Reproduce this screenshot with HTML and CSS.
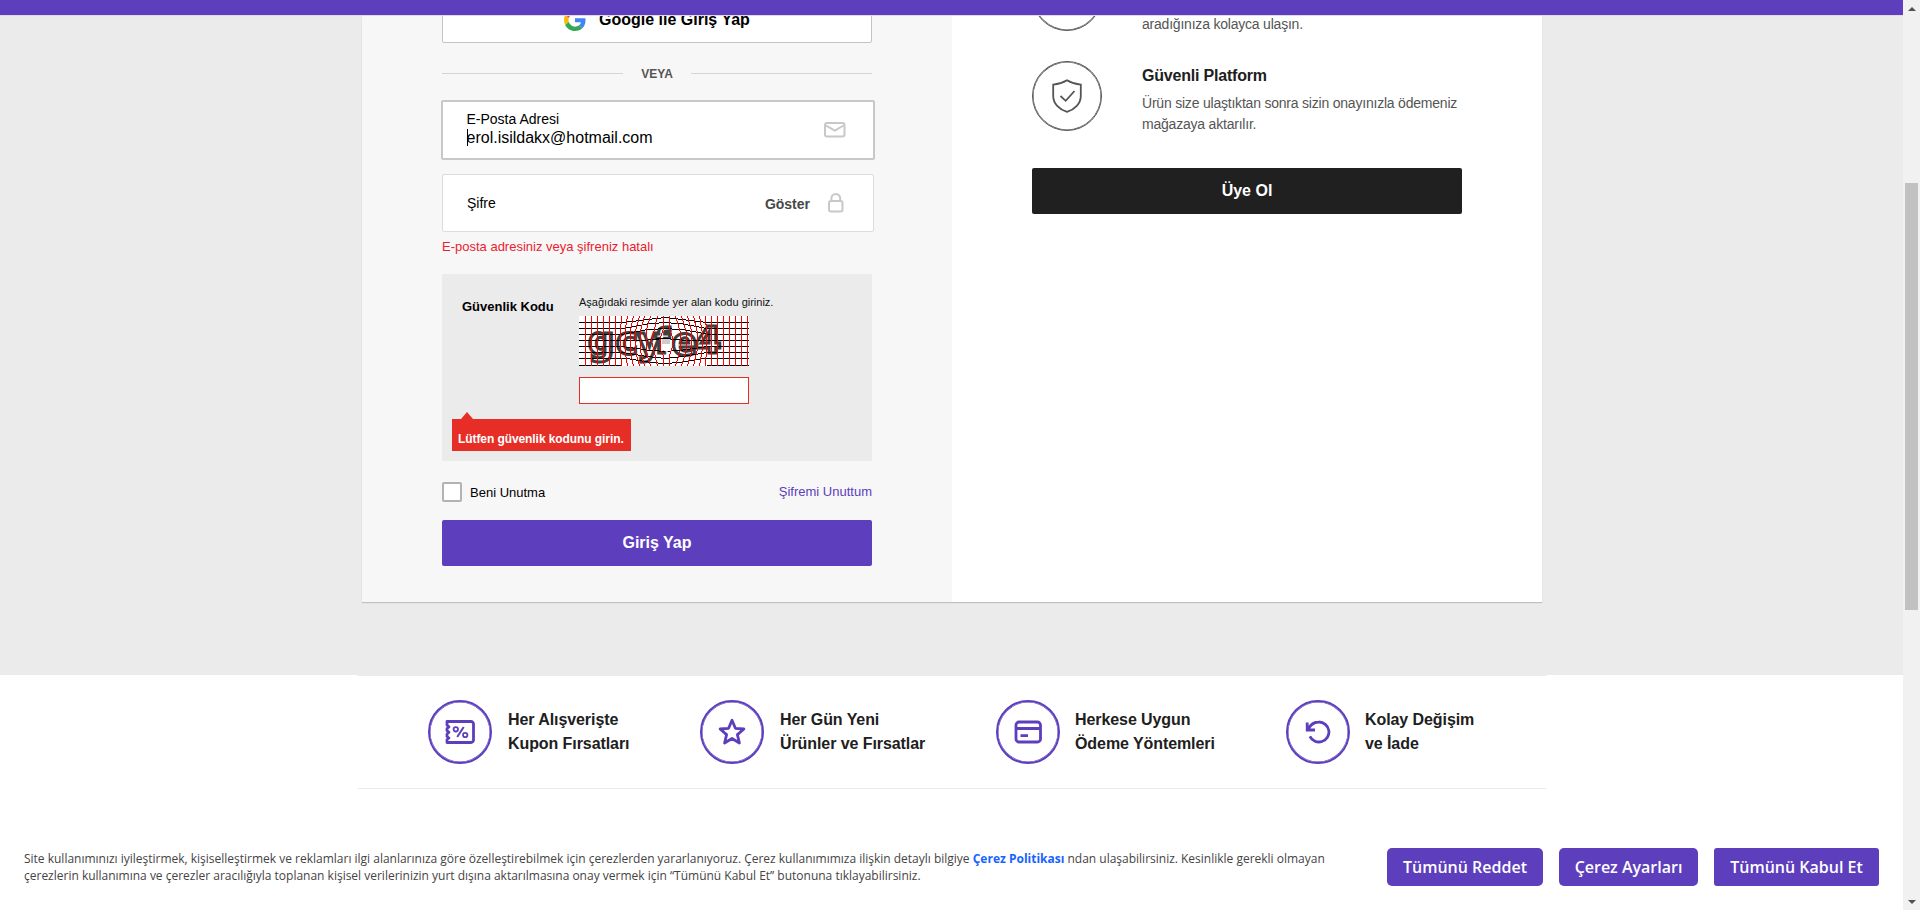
FILE: index.html
```html
<!DOCTYPE html>
<html lang="tr">
<head>
<meta charset="utf-8">
<title>Giriş Yap</title>
<link rel="stylesheet" href="styles.css">
</head>
<body>
<div class="window">
  <div class="page">
    <header class="topbar"></header>
    <main class="main">
      <div class="card">
        <section class="login">
          <button class="google">
            <svg width="22" height="22" viewBox="0 0 48 48"><path fill="#EA4335" d="M24 9.5c3.54 0 6.71 1.22 9.21 3.6l6.85-6.85C35.9 2.38 30.47 0 24 0 14.62 0 6.51 5.38 2.56 13.22l7.98 6.19C12.43 13.72 17.74 9.5 24 9.5z"/><path fill="#4285F4" d="M46.98 24.55c0-1.57-.15-3.09-.38-4.55H24v9.02h12.94c-.58 2.96-2.26 5.48-4.78 7.18l7.73 6c4.51-4.18 7.09-10.36 7.09-17.65z"/><path fill="#FBBC05" d="M10.53 28.59c-.48-1.45-.76-2.99-.76-4.59s.27-3.14.76-4.59l-7.98-6.19C.92 16.46 0 20.12 0 24s.92 7.54 2.56 10.78l7.97-6.19z"/><path fill="#34A853" d="M24 48c6.48 0 11.93-2.13 15.89-5.81l-7.73-6c-2.15 1.45-4.92 2.3-8.16 2.3-6.26 0-11.57-4.22-13.47-9.91l-7.98 6.19C6.51 42.62 14.62 48 24 48z"/></svg>
            <span>Google ile Giriş Yap</span>
          </button>
          <div class="divider"><span>VEYA</span></div>
          <div class="field field-active">
            <div class="field-text">
              <label>E-Posta Adresi</label>
              <div class="value"><i class="caret"></i>erol.isildakx@hotmail.com</div>
            </div>
            <svg class="mail" width="22" height="16" viewBox="0 0 22 16" fill="none" stroke="#c8c8c8" stroke-width="2"><rect x="1" y="1" width="19.5" height="13.6" rx="2"/><path d="M2 3.5l8.8 5.2 8.8-5.2"/></svg>
          </div>
          <div class="field field-pass">
            <label>Şifre</label>
            <span class="show">Göster</span>
            <svg width="16" height="20" viewBox="0 0 16 20" fill="none" stroke="#c8c8c8" stroke-width="2"><rect x="1" y="8" width="13.5" height="10.6" rx="2"/><path d="M3.4 8V5.4a4.4 4.4 0 0 1 8.8 0V8"/></svg>
          </div>
          <p class="error">E-posta adresiniz veya şifreniz hatalı</p>
          <div class="captcha">
            <strong>Güvenlik Kodu</strong>
            <div class="captcha-side">
              <span class="hint">Aşağıdaki resimde yer alan kodu giriniz.</span>
              <svg class="captcha-img" width="170" height="50" viewBox="0 0 170 50">
                <rect width="170" height="50" fill="#fff"/>
                <g class="code">
                  <text x="9" y="38" font-size="37">g</text>
                  <text x="37" y="38" font-size="37">c</text>
                  <text x="58" y="38" font-size="37">y</text>
                  <text x="76" y="37" font-size="34">f</text>
                  <text x="93" y="39" font-size="37">e</text>
                  <text x="116" y="37" font-size="38">4</text>
                </g>
                <g shape-rendering="crispEdges" fill="none" stroke-width="1">
                  <path stroke="#000" d="M0 6.5H44L86 1.500L128 6.500H170M0 12.500H44L68 8L86 6.500L104 8L128 12.500H170M0 18.500H42L66 14L86 12.500L106 14L130 18.500H170M0 24.500H64L74 23.500L86 22.500L98 23.500L108 24.500H170M0 30.500H44L68 34L86 35.500L104 34L128 30.500H170M0 36.500H44L68 40.500L86 42.500L104 40.500L128 36.500H170M0 42.500H48L72 46.500L86 47.500L100 46.500L124 42.500H170M0 49.500H42M128 49.500H170"/>
                  <path stroke="#f00" d="M6.500 0V50M12.500 0V50M18.500 0V50M24.500 0V50M30.500 0V50M36.500 0V50M42.500 0L41 25L42.500 50M48.500 0L46 15V35L48.500 50M54.500 0L51.500 15V35L54.500 50M60.500 0L56.500 15V35L60.500 50M65.500 0L61.500 15V35L65.500 50M71.500 0L67 15V35L71.500 50M78.500 0L75 15L72.500 25L75 35L78.500 50M84.500 0V12L81.500 22V34L84.500 40V50M90.500 0V12L93.500 22V30L90.500 40V50M96.500 0L101 15V35L96.500 50M102.500 0L107 15V35L102.500 50M108.500 0L112.500 15V35L108.500 50M114.500 0L118 15V35L114.500 50M120.500 0L123 15V35L120.500 50M126.500 0L128 25L126.500 50M132.500 0V50M138.500 0V50M144.500 0V50M150.500 0V50M156.500 0V50M162.500 0V50M168.500 0V50"/>
                </g>
                <path fill="#fff" d="M83 24h9v9l-4 3-5-2z"/><path fill="#ccc" d="M83 23h8v5h-8z"/><path stroke="#000" d="M77 22.500H92"/>
              </svg>
              <input class="captcha-input" type="text">
            </div>
            <div class="tip">Lütfen güvenlik kodunu girin.</div>
          </div>
          <div class="options">
            <label class="remember"><i class="box"></i><span>Beni Unutma</span></label>
            <a class="forgot">Şifremi Unuttum</a>
          </div>
          <button class="btn btn-login">Giriş Yap</button>
        </section>
        <section class="signup">
          <div class="feature">
            <i class="ring"></i>
            <div class="feature-text"><h3>&nbsp;</h3><p>&nbsp;<br>aradığınıza kolayca ulaşın.</p></div>
          </div>
          <div class="feature">
            <i class="ring"><svg width="30" height="34" viewBox="0 0 30 34" fill="none" stroke="#555" stroke-width="1.800"><path d="M15 1.200C11 3.600 6.500 5 1.200 5.600V17c0 7.500 6 13.500 13.800 15.800C22.800 30.500 28.800 24.500 28.800 17V5.600C23.500 5 19 3.600 15 1.200z"/><path d="M8.500 17l5.200 4.800 8.800-9.800"/></svg></i>
            <div class="feature-text"><h3>Güvenli Platform</h3><p>Ürün size ulaştıktan sonra sizin onayınızla ödemeniz<br>mağazaya aktarılır.</p></div>
          </div>
          <button class="btn btn-join">Üye Ol</button>
        </section>
      </div>
    </main>
    <section class="services">
      <div class="service s1"><i class="badge"><svg width="30" height="26" viewBox="0 -1 30 26" fill="none" stroke="#5d3ebc" stroke-width="2.800"><path d="M2 1.500H26a2.500 2.500 0 0 1 2.500 2.500V20a2.500 2.500 0 0 1-2.500 2.500H2V19.500l2-1.500-2-1.500V14l2-1.700-2-1.600V8.500L4 7 2 5z" stroke-linejoin="round"/><path d="M18.700 7l-6.500 10" stroke-width="2"/><circle cx="10.800" cy="9.300" r="2.200" stroke-width="1.800"/><circle cx="20.200" cy="15" r="2.200" stroke-width="1.800"/></svg></i><span>Her Alışverişte<br>Kupon Fırsatları</span></div>
      <div class="service s2"><i class="badge"><svg width="28" height="28" viewBox="0 0 28 28" fill="none" stroke="#5d3ebc" stroke-width="2.800" stroke-linejoin="round"><path d="M14 2.300l3.400 8 8.500.7-6.500 5.600 2 8.400L14 20.500 6.600 25l2-8.400L2.100 11l8.500-.7z"/></svg></i><span>Her Gün Yeni<br>Ürünler ve Fırsatlar</span></div>
      <div class="service s3"><i class="badge"><svg width="28" height="24" viewBox="0 0 28 24" fill="none" stroke="#5d3ebc" stroke-width="2.800"><rect x="2" y="2" width="24.500" height="20" rx="3"/><path d="M2 8.500H26.500M6.500 15.600H14"/></svg></i><span>Herkese Uygun<br>Ödeme Yöntemleri</span></div>
      <div class="service s4"><i class="badge"><svg width="26" height="24" viewBox="0 0 26 24" fill="none" stroke="#5d3ebc" stroke-width="2.800"><path d="M2.200 2.500V10H10M2.800 9.600C5.500 4.500 9.200 2 13.700 2a10 10 0 1 1-8.800 14.300"/></svg></i><span>Kolay Değişim<br>ve İade</span></div>
    </section>
    <section class="cookies">
      <p>Site kullanımınızı iyileştirmek, kişiselleştirmek ve reklamları ilgi alanlarınıza göre özelleştirebilmek için çerezlerden yararlanıyoruz. Çerez kullanımımıza ilişkin detaylı bilgiye <b>Çerez Politikası</b> ndan ulaşabilirsiniz. Kesinlikle gerekli olmayan<br>çerezlerin kullanımına ve çerezler aracılığıyla toplanan kişisel verilerinizin yurt dışına aktarılmasına onay vermek için “Tümünü Kabul Et” butonuna tıklayabilirsiniz.</p>
      <div class="cookie-actions">
        <button class="c1">Tümünü Reddet</button>
        <button class="c2">Çerez Ayarları</button>
        <button class="c3">Tümünü Kabul Et</button>
      </div>
    </section>
  </div>
  <div class="scrollbar">
    <i class="arrow up"></i>
    <i class="thumb"></i>
    <i class="arrow down"></i>
  </div>
</div>
</body>
</html>
```
FILE: styles.css
```css
* { box-sizing: border-box; }
body { margin: 0; background: #fff; font-family: "Liberation Sans", Arial, sans-serif; color: #000; overflow: hidden; }
button { border: 0; padding: 0; margin: 0; font-family: inherit; display: block; }
h3, p { margin: 0; }
svg { display: block; flex: none; }
i { display: block; flex: none; }

.window { display: flex; height: 910px; }
.page { width: 1903px; height: 910px; overflow: hidden; white-space: nowrap; }
.topbar { height: 16px; background: #5d3ebc; border-bottom: 1px solid #dedbe6; }

.main { height: 659px; background: #ebebeb; overflow: hidden; display: flex; align-items: flex-start; padding-left: 362px; }
.card { width: 1180px; height: 586px; display: flex; box-shadow: 0 1px 1px rgba(0,0,0,.18); background: #fff; }
.login { width: 590px; background: #f7f7f7; padding-left: 80px; }
.signup { width: 590px; padding-left: 80px; }

.google { width: 430px; height: 46px; margin-top: -19px; margin-bottom: 30px; display: flex; align-items: center; gap: 13px; padding-left: 121px; background: #fff; border: 1px solid #c4c4c4; border-radius: 2px; font-weight: bold; font-size: 16px; color: #000; }
.divider { width: 430px; height: 1px; display: flex; align-items: center; gap: 18px; font-size: 12px; font-weight: bold; color: #555; }
.divider::before, .divider::after { content: ""; flex: 1; height: 1px; background: #d5d5d5; }

.field { background: #fff; border-radius: 2px; display: flex; }
.field-active { width: 434px; height: 60px; margin: 26px 0 14px -1px; border: 2px solid #c8c8c8; padding: 9px 27px 0 24px; justify-content: space-between; }
.field-active label { display: block; font-size: 14px; line-height: 17px; height: 17px; margin-bottom: 0; }
.field-text { margin-left: -.5px; }
.value { display: flex; font-size: 16px; line-height: 20px; }
.caret { width: 1px; height: 17px; margin: 1px -1px 0 0; background: #000; }
.mail { margin-top: 11px; }
.field-pass { width: 432px; height: 58px; border: 1px solid #dcdcdc; align-items: center; padding: 0 29px 0 24px; font-size: 14px; }
.field-pass label { flex: 1; }
.show { font-weight: bold; color: #484848; margin: 2px 18px 0 0; }
.error { font-size: 13px; line-height: 16px; margin-top: 7px; color: #ea222f; }

.captcha { position: relative; width: 430px; height: 187px; margin-top: 19px; background: #ebebeb; display: flex; padding: 20px 0 0 20px; }
.captcha strong { width: 117px; font-size: 13px; line-height: 26px; }
.hint { display: block; font-size: 11px; line-height: 16px; height: 22px; color: #111; }
.captcha-img { margin-bottom: 11px; }
.code text { font-family: "DejaVu Sans", sans-serif; font-weight: bold; fill: #fff; stroke: #404040; stroke-width: 3; }
.captcha-input { display: block; width: 170px; height: 27px; border: 1px solid #e62e26; background: #fff; padding: 0; }
.tip { position: absolute; left: 10px; top: 145px; width: 179px; height: 32px; background: #e62e26; color: #fff; font-size: 12px; font-weight: bold; letter-spacing: -.08px; line-height: 40px; padding-left: 6px; }
.tip::before { content: ""; position: absolute; left: 9px; top: -7px; border: 6px solid transparent; border-top: 0; border-bottom: 7px solid #e62e26; }

.options { width: 430px; height: 20px; margin-top: 21px; display: flex; justify-content: space-between; align-items: center; font-size: 13px; }
.remember { display: flex; align-items: center; gap: 8px; }
.box { width: 20px; height: 20px; border: 2px solid #b3b3b3; border-radius: 2px; background: #fff; }
.forgot { color: #5d3ebc; margin-bottom: 2px; }
.btn { width: 430px; height: 46px; border-radius: 2px; color: #fff; font-size: 16px; font-weight: bold; text-align: center; }
.btn-login { margin-top: 18px; background: #5d3ebc; }
.btn-join { background: #202020; }

.feature { display: flex; gap: 40px; height: 100px; }
.feature:first-child { margin-top: -55px; }
.feature:nth-child(2) { height: 107px; }
.ring { width: 70px; height: 70px; border: 1px solid #555; box-shadow: inset 0 0 0 .6px #555; border-radius: 50%; display: flex; align-items: center; justify-content: center; }
.feature-text h3 { font-size: 16px; line-height: 20px; padding-top: 5px; color: #202020; letter-spacing: -.2px; }
.feature-text p { font-size: 14px; line-height: 21px; margin-top: 7px; color: #555; letter-spacing: -.21px; }

.services { width: 1188px; height: 114px; margin-left: 358px; border-top: 1px solid #ebebeb; border-bottom: 1px solid #ebebeb; display: flex; align-items: center; padding-left: 70px; }
.service { display: flex; align-items: center; gap: 16px; font-size: 16px; font-weight: bold; line-height: 24px; letter-spacing: -.08px; color: #202020; }
.badge { width: 64px; height: 64px; border: 2px solid #5d3ebc; box-shadow: inset 0 0 0 .5px #5d3ebc; border-radius: 50%; display: flex; align-items: center; justify-content: center; }
.s1 { width: 272px; }
.s2 { width: 296px; }
.s3 { width: 290px; }
.s3, .s4 { gap: 15px; }

.cookies { height: 121px; display: flex; align-items: flex-start; padding: 59px 24px 0; font-family: "Open Sans", "Noto Sans", sans-serif; }
.cookies p { width: 1363px; padding-top: 2px; font-size: 12px; line-height: 17px; color: #444; letter-spacing: -.005px; }
.cookies b { color: #1863ff; }
.cookie-actions { display: flex; gap: 16px; }
.cookie-actions button { height: 38px; background: #5d3ebc; color: #fff; border-radius: 5px; font-size: 16px; font-weight: 600; }
.cookie-actions .c1 { width: 156px; }
.cookie-actions .c2 { width: 139px; }
.cookie-actions .c3 { width: 165px; border-radius: 3px; }

.scrollbar { width: 17px; background: #f1f1f1; display: flex; flex-direction: column; align-items: center; padding: 7px 0 6px; }
.arrow { width: 0; height: 0; border: 4px solid transparent; }
.up { border-top: 0; border-bottom: 4px solid #505050; }
.down { border-bottom: 0; border-top: 4px solid #505050; margin-top: auto; }
.thumb { width: 13px; height: 427px; margin-top: 172px; background: #c1c1c1; }
```
